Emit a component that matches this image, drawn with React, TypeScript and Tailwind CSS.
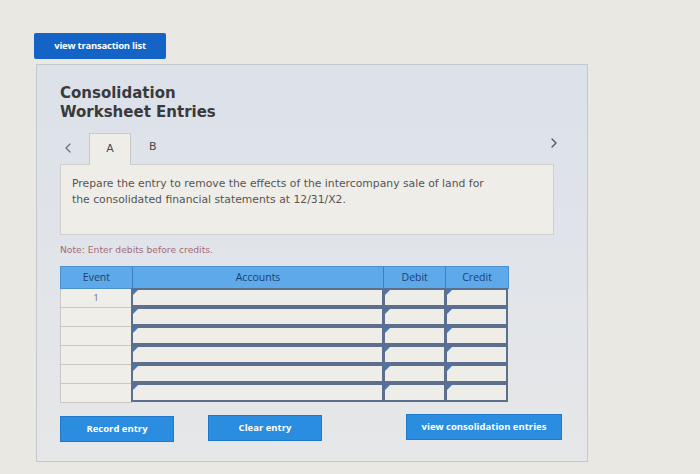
import React from 'react';
import { ChevronLeft, ChevronRight } from 'lucide-react';

const rows = [1, 2, 3, 4, 5, 6];

function Corner() {
  return (
    <span className="absolute left-0 top-0 w-0 h-0 border-t-[5px] border-r-[5px] border-t-[#3d78c4] border-r-transparent" />
  );
}

function InputCell({ width }: { width: string }) {
  return (
    <div className={`relative h-[19px] ${width} border-[2px] border-[#5d6f8f] bg-[#efede8] -ml-[1px] -mt-[1px]`}>
      <Corner />
    </div>
  );
}

export default function App() {
  return (
    <div className="w-[700px] h-[474px] bg-[#e9e8e3] overflow-hidden pt-[32px] pl-[34px] font-['DejaVu_Sans',sans-serif]">
      <button className="w-[132px] h-[26px] bg-[#1463c6] rounded-[2px] text-white text-[9.5px] font-bold font-['Open_Sans',sans-serif] tracking-tight">
        view transaction list
      </button>

      <div className="mt-[5px] ml-[2px] w-[552px] h-[398px] border border-[#c4c7cc] bg-gradient-to-b from-[#dce1ea] to-[#e6e7e8] pl-[23px] pt-[19px]">
        <h1 className="text-[15px] leading-[19px] font-bold text-[#3a3a3c]">
          Consolidation
          <br />
          Worksheet Entries
        </h1>

        {/* tabs */}
        <div className="mt-[10px] flex items-end h-[32px] w-[495px]">
          <span className="w-[29px] pb-[8px] text-[#6f7680]">
            <ChevronLeft size={16} strokeWidth={2} />
          </span>
          <div className="w-[42px] h-[32px] border border-b-0 border-[#c9c9c6] bg-[#efede8] flex items-center justify-center text-[11px] text-[#4a4a4a] -mb-px relative z-10">
            A
          </div>
          <span className="ml-[18px] pb-[9px] text-[11px] text-[#4a4a4a]">B</span>
          <span className="ml-auto pb-[13px] mr-[-7px] text-[#4f5968]">
            <ChevronRight size={16} strokeWidth={2} />
          </span>
        </div>
        <div className="w-[494px] h-[71px] bg-[#efede7] border border-[#cfd0cc] px-[11px] pt-[11px] text-[10.8px] leading-[16px] text-[#555]">
          Prepare the entry to remove the effects of the intercompany sale of land for
          <br />
          the consolidated financial statements at 12/31/X2.
        </div>

        <p className="mt-[8px] text-[9.2px] text-[#a36c74]">Note: Enter debits before credits.</p>

        {/* table */}
        <div className="mt-[9px] w-[449px] font-['Open_Sans',sans-serif]">
          <div className="flex h-[23px] bg-[#5da9e9] text-[10.5px] font-medium text-[#1f3f70] border border-[#4a8fcf]">
            <div className="w-[72px] flex items-center justify-center border-r border-[#3f7fbf]">Event</div>
            <div className="w-[252px] flex items-center justify-center border-r border-[#3f7fbf]">Accounts</div>
            <div className="w-[62px] flex items-center justify-center border-r border-[#3f7fbf]">Debit</div>
            <div className="w-[62px] flex items-center justify-center">Credit</div>
          </div>
          {rows.map((r) => (
            <div key={r} className="flex">
              <div className="w-[72px] h-[19px] border border-t-0 border-[#c9c8c3] bg-[#efeee9] text-[9px] text-[#666] flex justify-center pt-[2px]">
                {r === 1 ? '1' : ''}
              </div>
              <InputCell width="w-[253px]" />
              <InputCell width="w-[63px]" />
              <InputCell width="w-[63px]" />
            </div>
          ))}
        </div>

        {/* buttons */}
        <div className="mt-[11px] flex items-center font-['Open_Sans',sans-serif] text-white text-[9.5px] font-bold">
          <button className="w-[114px] h-[26px] bg-[#2b8de0] border border-[#1f78c8] mt-[2px]">Record entry</button>
          <button className="ml-[34px] w-[114px] h-[26px] bg-[#2b8de0] border border-[#1f78c8]">Clear entry</button>
          <button className="ml-[84px] w-[156px] h-[26px] bg-[#2b8de0] border border-[#1f78c8] -mt-[2px]">
            view consolidation entries
          </button>
        </div>
      </div>
    </div>
  );
}
